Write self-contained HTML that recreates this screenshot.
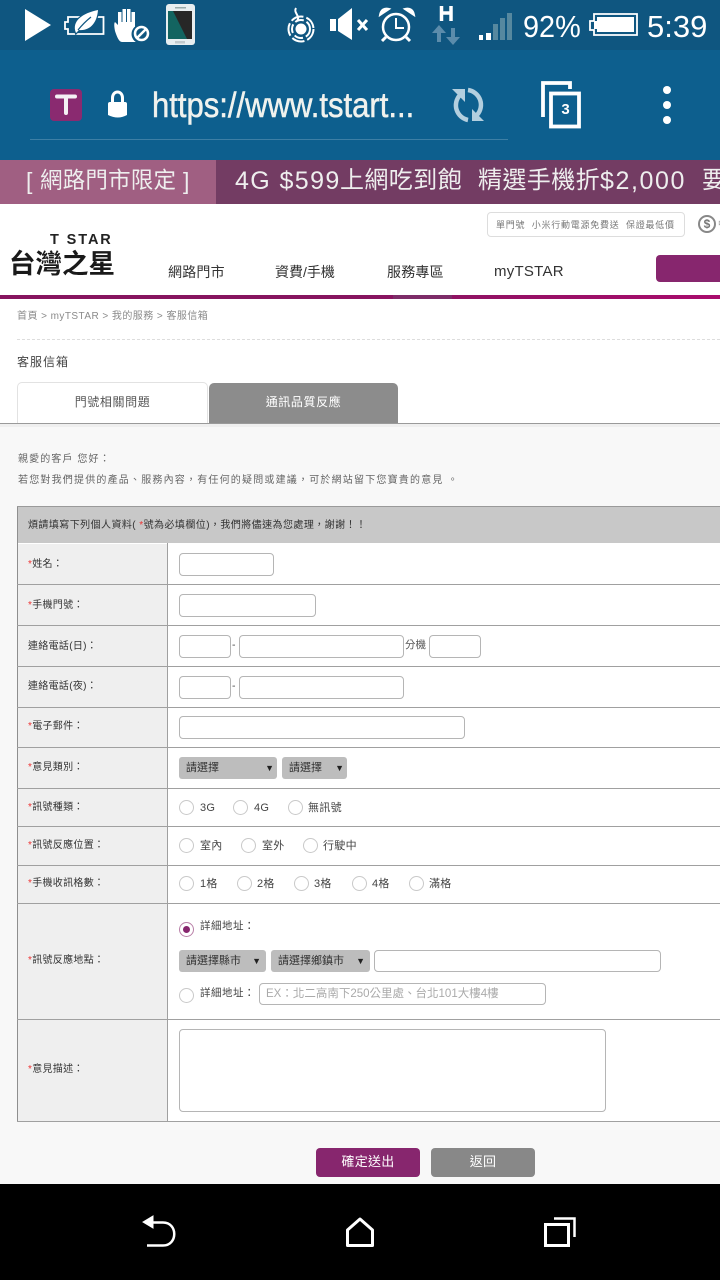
<!DOCTYPE html>
<html lang="zh-Hant"><head><meta charset="utf-8"><title>客服信箱</title>
<style>
html,body{margin:0;padding:0;width:720px;height:1280px;overflow:hidden;background:#f8f8f8}
body{position:relative;font-family:"Liberation Sans","Noto Sans CJK TC",sans-serif}
.a{position:absolute;white-space:nowrap}
.t{position:absolute;white-space:nowrap;font-size:10.5px;line-height:14px;color:#444}
.o{position:absolute;white-space:nowrap;font-size:11px;line-height:14px;color:#444;letter-spacing:.3px}
.l{position:absolute;white-space:nowrap;font-size:10px;line-height:14px;color:#333;left:28px;letter-spacing:.3px}
.l i{color:#e33;font-style:normal}
.in{position:absolute;box-sizing:border-box;background:#fff;border:1px solid #b5b5b5;border-radius:4px;height:23px}
.sel{position:absolute;box-sizing:border-box;background:#bdbdbd;border-radius:3px;height:22px;font-size:11px;line-height:22px;color:#333;padding-left:7px;white-space:nowrap}
.sel b{position:absolute;right:3px;top:0;font-size:9px;font-weight:normal;color:#222}
.r{position:absolute;box-sizing:border-box;width:15px;height:15px;border:1px solid #c9c9c9;border-radius:50%;background:#fff}
.h{position:absolute;left:17px;width:703px;height:1px;background:#a0a0a0}
.b{position:absolute;top:165px;line-height:32px;color:#eee;white-space:nowrap}
</style></head><body>
<!-- Status bar -->
<div class="a" style="left:0;top:0;width:720px;height:50px;background:#0f5680"></div>
<svg class="a" style="left:0;top:0" width="720" height="50" viewBox="0 0 720 50">
<path d="M25 9L51 25L25 41Z" fill="#fff"/>
<path d="M68 17H103.500V34H68V29H65V22H68Z" fill="none" stroke="#fff" stroke-width="1.800"/>
<path d="M76 33C71 21 83 13 98 10C97 23 90 31 79 30L76 33Z" fill="#fff" stroke="#0f5680" stroke-width="2.500" paint-order="stroke"/>
<path d="M78 30C82 25 86 21 91 17" stroke="#0f5680" stroke-width="1.200" fill="none"/>
<path d="M115 31C114 26 114 23 115 22L118 25V12H121.500V22H122.500V9H126V22H127V9H130.500V22H131.500V12H135V28H137V42H122C119 42 117 37 115 31Z" fill="#fff"/>
<circle cx="141" cy="34" r="9.500" fill="#0f5680"/><circle cx="141.500" cy="33.500" r="6.500" fill="none" stroke="#fff" stroke-width="2.500"/><path d="M137 38L146 29" stroke="#fff" stroke-width="2.500"/>
<rect x="166" y="4" width="29" height="41" rx="3" fill="#e9eef0"/><path d="M168 11H192V39H168Z" fill="#272727"/><path d="M168 11H173L187 39H168Z" fill="#136460"/>
<rect x="175" y="7" width="11" height="1.500" fill="#9aa"/><rect x="175" y="41" width="10" height="2.500" fill="#c3c9cc"/>
<g fill="none" stroke="#fff" stroke-width="2"><path d="M296 8C293 13 301 16 297 21"/><circle cx="301" cy="29" r="12.500" stroke-dasharray="13 3"/><circle cx="301" cy="29" r="9" stroke-dasharray="9 3"/></g><circle cx="301" cy="29" r="5.500" fill="#fff"/>
<path d="M330 19H336V31H330ZM338 19L352 8V40L338 31Z" fill="#fff"/><path d="M358 20L367 30M367 20L358 30" stroke="#fff" stroke-width="3"/>
<circle cx="396" cy="27" r="13" fill="none" stroke="#fff" stroke-width="2.500"/><path d="M396 18V28H404" fill="none" stroke="#fff" stroke-width="2"/>
<path d="M380 15C381 9 385 8 389 9ZM414 15C413 9 409 8 405 9Z" fill="#fff" stroke="#fff" stroke-width="2"/><path d="M386 37L382 41M406 37L410 41" stroke="#fff" stroke-width="3"/>
<path d="M441.500 6V21M451 6V21M441.500 13H451" stroke="#fff" stroke-width="3.500" fill="none"/>
<path d="M439 25L446 33H441V42H437V33H432ZM453 45L460 37H455V28H451V37H446Z" fill="#5c8cab"/>
<rect x="479" y="35" width="4" height="5" fill="#fff"/><rect x="486" y="33" width="5" height="7" fill="#fff"/>
<rect x="493" y="24" width="5" height="16" fill="#56889f"/><rect x="500" y="18" width="5" height="22" fill="#56889f"/><rect x="507" y="13" width="5" height="27" fill="#56889f"/>
<path d="M593 21H594V14H637V35H594V30H590V21Z" fill="none" stroke="#fff" stroke-width="1.800"/><path d="M597 21V17H634V32H597V29H594V21Z" fill="#fff"/>
</svg>
<div class="a" style="left:523px;top:8px;font-size:31px;line-height:38px;color:#fff;transform:scaleX(.93);transform-origin:0 0">92%</div>
<div class="a" style="left:647px;top:8px;font-size:31px;line-height:38px;color:#fff">5:39</div>
<!-- Toolbar -->
<div class="a" style="left:0;top:50px;width:720px;height:110px;background:#0d5f8e"></div>
<div class="a" style="left:50px;top:89px;width:32px;height:32px;background:#8a2a70;border-radius:4px"></div>
<svg class="a" style="left:0;top:50px" width="720" height="110" viewBox="0 50 720 110">
<path d="M57 96.500H75M66 96.500V113" stroke="#f4f0f4" stroke-width="4" stroke-linecap="round" fill="none"/>
<path d="M112.500 105V98C112.500 90 122.500 90 122.500 98V105" fill="none" stroke="#fff" stroke-width="3"/><path d="M108 104Q108 102 110 102H125Q127 102 127 104V115Q118 120 108 115Z" fill="#fff"/>
<g fill="none" stroke="#b3cfdf" stroke-width="4.500"><path d="M460 95A15 15 0 0 0 468 120"/><path d="M468 90A15 15 0 0 1 477 115"/></g>
<path d="M452 89H465V102ZM484 121H472V109Z" fill="#b3cfdf"/>
<path d="M543 117V83H570V89" fill="none" stroke="#fff" stroke-width="3.800"/>
<rect x="551" y="93.500" width="28" height="33" fill="#0d5f8e" stroke="#fff" stroke-width="3.800"/>
<circle cx="667" cy="90" r="4" fill="#fff"/><circle cx="667" cy="105" r="4" fill="#fff"/><circle cx="667" cy="120" r="4" fill="#fff"/>
</svg>
<div class="a" style="left:152px;top:84px;font-size:35px;line-height:44px;color:#f0f2ee;-webkit-text-stroke:.5px #f0f2ee;transform:scaleX(.887);transform-origin:0 0">https://www.tstart...</div>
<div class="a" style="left:555px;top:101px;width:21px;text-align:center;font-size:15px;font-weight:bold;line-height:18px;color:#fff">3</div>
<div class="a" style="left:30px;top:139px;width:478px;height:1px;background:#3d7fa5"></div>
<!-- Banner -->
<div class="a" style="left:0;top:160px;width:216px;height:44px;background:#a05f82"></div>
<div class="a" style="left:216px;top:160px;width:504px;height:44px;background:#733c63"></div>
<div class="b" style="left:26px;font-size:23px">[</div>
<div class="b" style="left:40px;font-size:22.500px;letter-spacing:.2px">網路門市限定</div>
<div class="b" style="left:183px;font-size:23px">]</div>
<div class="b" style="left:235px;font-size:25px;letter-spacing:1.400px">4G $599</div>
<div class="b" style="left:340px;font-size:24px;letter-spacing:.4px">上網吃到飽</div>
<div class="b" style="left:478px;font-size:24px;letter-spacing:.4px">精選手機折</div>
<div class="b" style="left:600px;font-size:25px;letter-spacing:1.600px">$2,000</div>
<div class="b" style="left:702px;font-size:24px">要</div>
<!-- Header -->
<div class="a" style="left:0;top:204px;width:720px;height:222px;background:#fff"></div>
<div class="a" style="left:487px;top:212px;width:198px;height:25px;box-sizing:border-box;border:1px solid #ddd;border-radius:4px;font-size:9px;line-height:24px;color:#777;padding-left:8px;letter-spacing:.75px">單門號&nbsp;&nbsp;小米行動電源免費送&nbsp;&nbsp;保證最低價</div>
<div class="a" style="left:698px;top:215px;width:18px;height:18px;box-sizing:border-box;border:2px solid #888;border-radius:50%;font-size:12px;font-weight:bold;line-height:14px;text-align:center;color:#777">$</div>
<div class="a" style="left:718px;top:218px;font-size:9px;line-height:12px;color:#999">中</div>
<div class="a" style="left:50px;top:232px;font-size:14.500px;font-weight:bold;line-height:17px;color:#222;letter-spacing:1.900px">T STAR</div>
<div class="a" style="left:9px;top:248px;font-size:26.500px;line-height:32px;font-weight:bold;color:#1a1a1a">台灣之星</div>
<div class="a" style="left:168px;top:263px;font-size:14px;line-height:18px;color:#333;letter-spacing:.2px">網路門市</div>
<div class="a" style="left:275px;top:263px;font-size:14px;line-height:18px;color:#333">資費/手機</div>
<div class="a" style="left:387px;top:263px;font-size:14px;line-height:18px;color:#333;letter-spacing:.2px">服務專區</div>
<div class="a" style="left:494px;top:263px;font-size:15px;line-height:18px;color:#333;letter-spacing:.25px">myTSTAR</div>
<div class="a" style="left:656px;top:255px;width:64px;height:27px;background:#87266e;border-radius:4px 0 0 4px"></div>
<div class="a" style="left:0;top:295px;width:720px;height:4px;background:linear-gradient(90deg,#86145f,#86145f 50%,#a90c6d 100%)"></div>
<div class="a" style="left:393px;top:295px;width:59px;height:4px;background:#7d2c68"></div>
<div class="a" style="left:17px;top:310px;font-size:10px;line-height:14px;color:#8a8a8a;letter-spacing:.45px">首頁 &gt; myTSTAR &gt; 我的服務 &gt; 客服信箱</div>
<div class="a" style="left:17px;top:339px;width:703px;border-top:1px dashed #ddd"></div>
<div class="a" style="left:17px;top:354px;font-size:12px;line-height:16px;color:#444;letter-spacing:1px">客服信箱</div>
<!-- Tabs -->
<div class="a" style="left:17px;top:382px;width:191px;height:42px;box-sizing:border-box;background:#fff;border:1px solid #e2e2e2;border-bottom:0;border-radius:5px 5px 0 0;text-align:center;font-size:12px;line-height:38px;color:#555;letter-spacing:.6px">門號相關問題</div>
<div class="a" style="left:209px;top:383px;width:189px;height:40px;background:#8c8c8c;border-radius:5px 5px 0 0;text-align:center;font-size:12px;line-height:39px;color:#fff;letter-spacing:.6px">通訊品質反應</div>
<div class="a" style="left:0;top:423px;width:720px;height:1px;background:#9a9a9a"></div>
<div class="a" style="left:0;top:424px;width:720px;height:3px;background:#efefef"></div>
<!-- Intro -->
<div class="a" style="left:18px;top:453px;font-size:10px;line-height:14px;color:#666;letter-spacing:1.100px">親愛的客戶 您好：</div>
<div class="a" style="left:18px;top:474px;font-size:10px;line-height:14px;color:#666;letter-spacing:1.200px">若您對我們提供的產品、服務內容，有任何的疑問或建議，可於網站留下您寶貴的意見 。</div>
<!-- Table -->
<div class="a" style="left:17px;top:506px;width:703px;height:616px;background:#fff"></div>
<div class="a" style="left:18px;top:544px;width:149px;height:577px;background:#efefef"></div>
<div class="a" style="left:17px;top:506px;width:703px;height:37px;background:#c8c8c8"></div>
<div class="a" style="left:17px;top:506px;width:1px;height:616px;background:#8f8f8f"></div>
<div class="a" style="left:167px;top:543px;width:1px;height:578px;background:#a0a0a0"></div>
<div class="h" style="top:506px;background:#9a9a9a"></div>
<div class="h" style="top:584px"></div><div class="h" style="top:625px"></div><div class="h" style="top:666px"></div><div class="h" style="top:707px"></div><div class="h" style="top:747px"></div><div class="h" style="top:788px"></div><div class="h" style="top:826px"></div><div class="h" style="top:865px"></div><div class="h" style="top:903px"></div><div class="h" style="top:1019px"></div><div class="h" style="top:1121px"></div>
<div class="a" style="left:28px;top:519px;font-size:10px;line-height:14px;color:#333;letter-spacing:.43px">煩請填寫下列個人資料( <span style="color:#e33">*</span>號為必填欄位)，我們將儘速為您處理，謝謝！！</div>
<div class="l" style="top:558px"><i>*</i>姓名：</div>
<div class="l" style="top:599px"><i>*</i>手機門號：</div>
<div class="l" style="top:640px">連絡電話(日)：</div>
<div class="l" style="top:680px">連絡電話(夜)：</div>
<div class="l" style="top:720px"><i>*</i>電子郵件：</div>
<div class="l" style="top:761px"><i>*</i>意見類別：</div>
<div class="l" style="top:801px"><i>*</i>訊號種類：</div>
<div class="l" style="top:839px"><i>*</i>訊號反應位置：</div>
<div class="l" style="top:877px"><i>*</i>手機收訊格數：</div>
<div class="l" style="top:954px"><i>*</i>訊號反應地點：</div>
<div class="l" style="top:1063px"><i>*</i>意見描述：</div>
<div class="in" style="left:179px;top:553px;width:95px"></div>
<div class="in" style="left:179px;top:594px;width:137px"></div>
<div class="in" style="left:179px;top:635px;width:52px"></div><div class="t" style="left:232px;top:638px">-</div>
<div class="in" style="left:239px;top:635px;width:165px"></div><div class="t" style="left:405px;top:638px;color:#555">分機</div>
<div class="in" style="left:429px;top:635px;width:52px"></div>
<div class="in" style="left:179px;top:676px;width:52px"></div><div class="t" style="left:232px;top:679px">-</div>
<div class="in" style="left:239px;top:676px;width:165px"></div>
<div class="in" style="left:179px;top:716px;width:286px"></div>
<div class="sel" style="left:179px;top:757px;width:98px">請選擇<b>▼</b></div>
<div class="sel" style="left:282px;top:757px;width:65px">請選擇<b>▼</b></div>
<div class="r" style="left:179px;top:800px"></div><div class="o" style="left:200px;top:801px">3G</div>
<div class="r" style="left:233px;top:800px"></div><div class="o" style="left:254px;top:801px">4G</div>
<div class="r" style="left:288px;top:800px"></div><div class="o" style="left:308px;top:801px">無訊號</div>
<div class="r" style="left:179px;top:838px"></div><div class="o" style="left:200px;top:839px">室內</div>
<div class="r" style="left:241px;top:838px"></div><div class="o" style="left:262px;top:839px">室外</div>
<div class="r" style="left:303px;top:838px"></div><div class="o" style="left:323px;top:839px">行駛中</div>
<div class="r" style="left:179px;top:876px"></div><div class="o" style="left:200px;top:877px">1格</div>
<div class="r" style="left:237px;top:876px"></div><div class="o" style="left:257px;top:877px">2格</div>
<div class="r" style="left:294px;top:876px"></div><div class="o" style="left:314px;top:877px">3格</div>
<div class="r" style="left:352px;top:876px"></div><div class="o" style="left:372px;top:877px">4格</div>
<div class="r" style="left:409px;top:876px"></div><div class="o" style="left:429px;top:877px">滿格</div>
<div class="r" style="left:179px;top:922px;border-color:#b980a8"></div><div class="a" style="left:183px;top:926px;width:7px;height:7px;border-radius:50%;background:#87266e"></div>
<div class="t" style="left:200px;top:919px;letter-spacing:.5px">詳細地址：</div>
<div class="sel" style="left:179px;top:950px;width:87px">請選擇縣市<b style="right:5px">▼</b></div>
<div class="sel" style="left:271px;top:950px;width:99px">請選擇鄉鎮市<b style="right:5px">▼</b></div>
<div class="in" style="left:374px;top:950px;width:287px;height:22px"></div>
<div class="r" style="left:179px;top:988px"></div>
<div class="t" style="left:200px;top:986px;letter-spacing:.5px">詳細地址：</div>
<div class="in" style="left:259px;top:983px;width:287px;height:22px;font-size:11.500px;line-height:20px;color:#aaa;padding-left:6px;white-space:nowrap">EX：北二高南下250公里處、台北101大樓4樓</div>
<div class="in" style="left:179px;top:1029px;width:427px;height:83px"></div>
<!-- Buttons -->
<div class="a" style="left:316px;top:1148px;width:104px;height:29px;background:#87266e;border-radius:4px;text-align:center;font-size:13px;line-height:28px;color:#fff;letter-spacing:.3px">確定送出</div>
<div class="a" style="left:431px;top:1148px;width:104px;height:29px;background:#888;border-radius:4px;text-align:center;font-size:13px;line-height:28px;color:#fff;letter-spacing:.3px">返回</div>
<!-- Nav bar -->
<div class="a" style="left:0;top:1184px;width:720px;height:96px;background:#000"></div>
<svg class="a" style="left:0;top:1184px" width="720" height="96" viewBox="0 1184 720 96">
<path d="M151 1222.500H163C178 1222.500 178 1245.500 163 1245.500H147" fill="none" stroke="#fff" stroke-width="2.500"/><path d="M143 1222L153 1216V1228Z" fill="#fff" stroke="#fff"/>
<path d="M347.500 1230L360 1219L372.500 1230V1245.500H347.500Z" fill="none" stroke="#fff" stroke-width="3" stroke-linejoin="round"/>
<rect x="545.500" y="1224.500" width="23" height="21" fill="none" stroke="#fff" stroke-width="3"/>
<path d="M554 1218.500H574.500V1237" fill="none" stroke="#fff" stroke-width="2.500"/>
</svg>
</body></html>
